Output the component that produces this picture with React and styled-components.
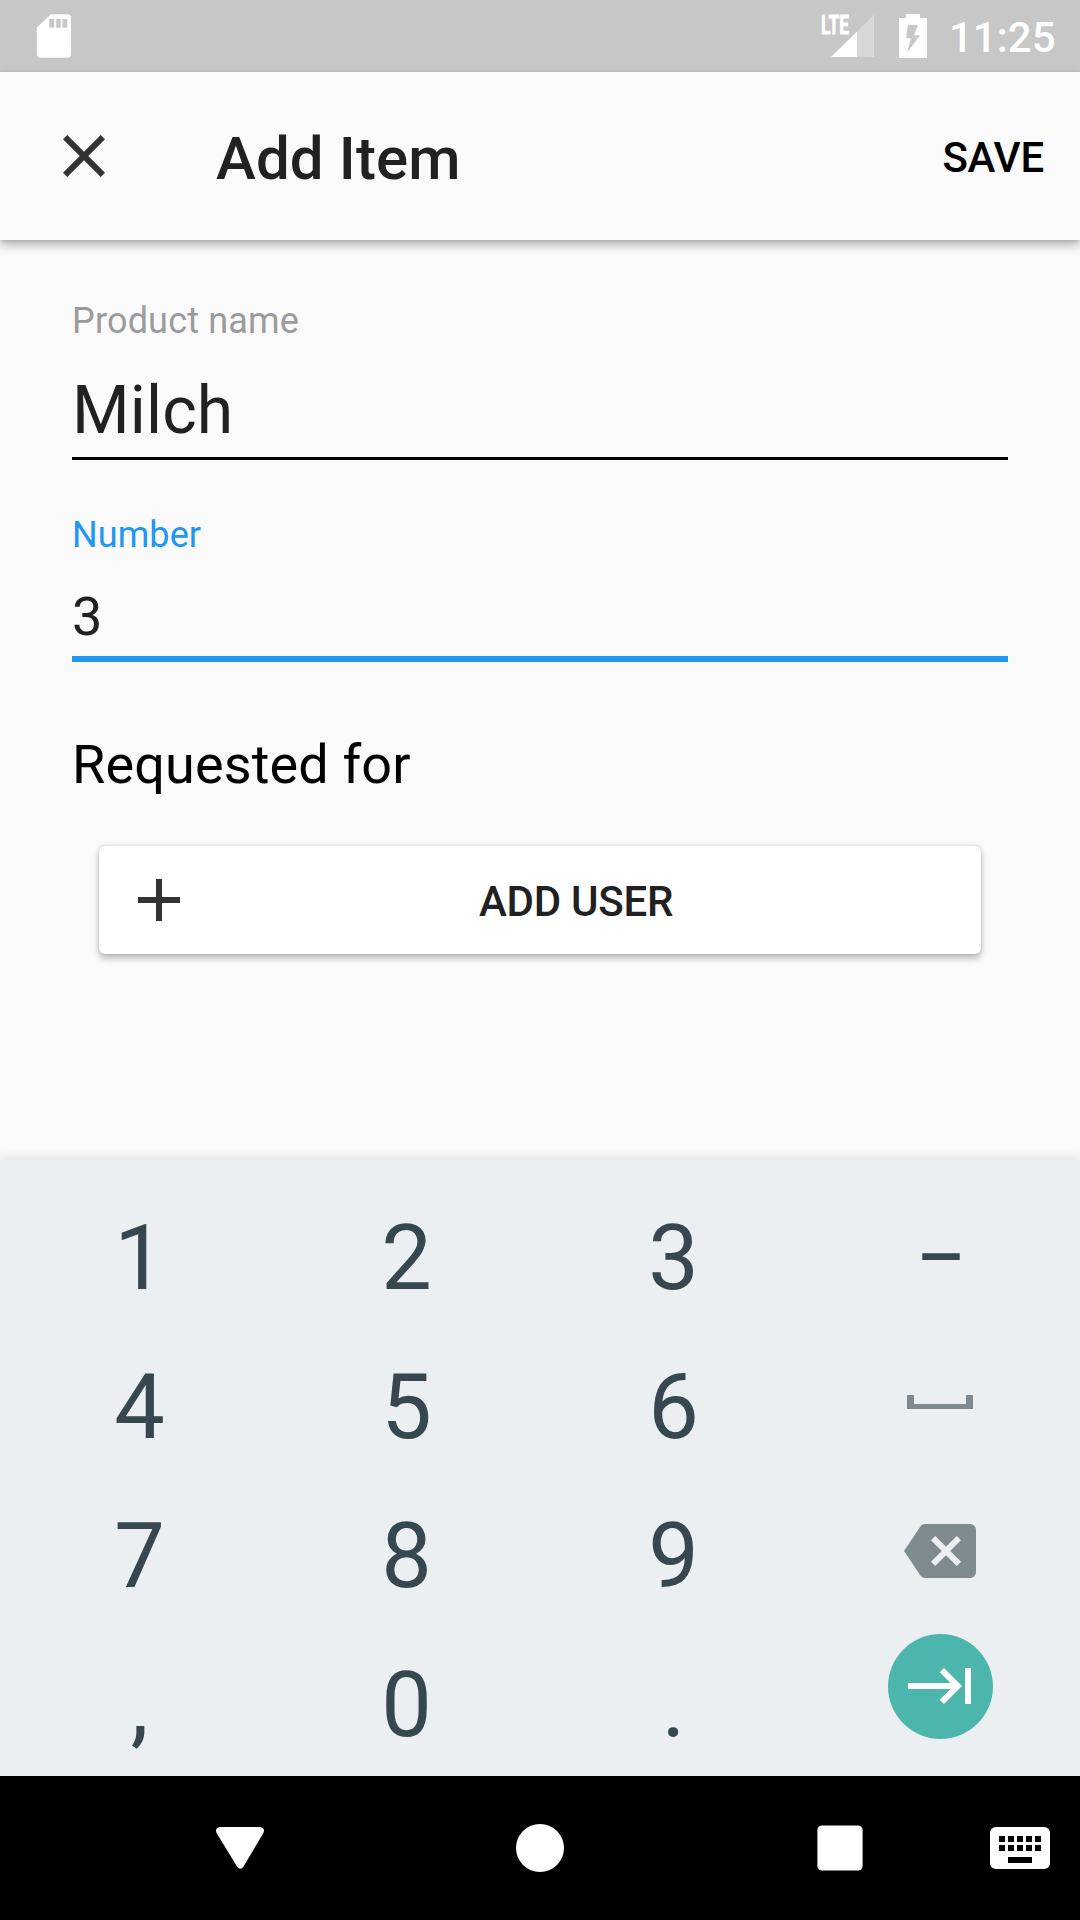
import React from 'react';
import styled, { createGlobalStyle } from 'styled-components';

const GlobalStyle = createGlobalStyle`
  * { box-sizing: border-box; }
  body { margin: 0; background: #fafafa; }
  button, input { font: inherit; color: inherit; border: 0; background: none; padding: 0; margin: 0; outline: 0; }
  svg { display: block; flex: none; }
`;

const Screen = styled.div`
  width: 1080px;
  height: 1920px;
  display: flex;
  flex-direction: column;
  overflow: hidden;
  background: #fafafa;
  color: #212121;
  font-family: Roboto, 'Liberation Sans', sans-serif;
`;

const StatusBar = styled.header`
  height: 72px;
  flex: none;
  display: flex;
  align-items: center;
  justify-content: space-between;
  padding: 0 25px 0 36px;
  background: #c7c7c7;
  color: #fff;
`;

const StatusGroup = styled.div`
  display: flex;
  align-items: center;
`;

const BatteryIcon = styled.svg`
  margin-left: 25px;
`;

const SignalIcon = styled.svg`
  overflow: visible;
`;

const Clock = styled.time`
  width: 106px;
  margin-left: 22px;
  padding-top: 3px;
  text-align: right;
  white-space: nowrap;
  font-size: 42px;
  font-weight: 500;
  line-height: 50px;
`;

const Toolbar = styled.div`
  height: 168px;
  flex: none;
  display: flex;
  align-items: center;
  padding: 0 36px 0 48px;
  background: #fafafa;
  box-shadow: 0 6px 9px rgba(0, 0, 0, 0.24), 0 1px 4px rgba(0, 0, 0, 0.16);
`;

const IconButton = styled.button`
  width: 72px;
  height: 72px;
  color: #333;
`;

const Title = styled.h1`
  flex: 1;
  margin: 0 0 0 96px;
  padding-top: 5px;
  font-size: 60px;
  font-weight: 500;
  line-height: 70px;
  letter-spacing: 0.12px;
`;

const SaveButton = styled.button`
  padding-top: 3px;
  color: #000;
  font-size: 42px;
  font-weight: 500;
  line-height: 50px;
  letter-spacing: -0.2px;
`;

const Form = styled.main`
  flex: 1;
  display: flex;
  flex-direction: column;
  padding: 60px 72px 0;
`;

const Field = styled.label`
  display: flex;
  flex-direction: column;
  margin-bottom: ${(p) => p.$after}px;
`;

const Label = styled.span`
  margin-bottom: 29px;
  color: ${(p) => (p.$active ? '#2196f3' : '#9b9b9b')};
  font-size: 36px;
  line-height: 42px;
  letter-spacing: ${(p) => (p.$active ? 0.08 : 0.18)}px;
`;

const Input = styled.input`
  width: 100%;
  height: ${(p) => p.$height}px;
  padding-bottom: 8px;
  border-bottom: ${(p) => (p.$active ? '6px solid #2196f3' : '3px solid #000')};
  font-size: ${(p) => p.$size}px;
  letter-spacing: 0.15px;
`;

const SectionTitle = styled.h2`
  margin: 0 0 49px;
  color: #000;
  font-size: 54px;
  font-weight: 400;
  line-height: 64px;
  letter-spacing: 0.14px;
`;

const AddUserButton = styled.button`
  height: 108px;
  margin: 0 27px;
  padding: 0 24px;
  display: flex;
  align-items: center;
  border-radius: 6px;
  background: #fff;
  box-shadow: 0 5px 6px rgba(0, 0, 0, 0.22), 0 0 4px rgba(0, 0, 0, 0.16);
`;

const ButtonText = styled.span`
  flex: 1;
  padding-top: 3px;
  text-align: center;
  font-size: 42px;
  font-weight: 500;
  line-height: 50px;
  letter-spacing: -0.25px;
`;

const Keyboard = styled.section`
  height: 616px;
  flex: none;
  padding: 10px 6px;
  display: grid;
  grid-template-columns: repeat(4, 267px);
  grid-auto-rows: 149px;
  background: #ebeff2;
  box-shadow: 0 0 10px 2px rgba(0, 0, 0, 0.11);
`;

const Key = styled.button`
  padding-top: 28px;
  display: flex;
  align-items: center;
  justify-content: center;
  color: #37474f;
  font-size: 90px;
  line-height: 121px;
`;

const Dash = styled.span`
  padding-left: 2px;
  transform: scaleX(0.85);
`;

const KeyIcon = styled.span`
  display: flex;
  margin-bottom: 11px;
  padding-right: 1px;
  color: #808b91;
`;

const NextCircle = styled.span`
  width: 105px;
  height: 105px;
  margin: 0 1px 39px 0;
  padding-left: 2px;
  display: flex;
  align-items: center;
  justify-content: center;
  border-radius: 50%;
  background: #4db6ac;
  color: #fff;
`;

const NavBar = styled.nav`
  height: 144px;
  flex: none;
  padding: 0 30px 0 90px;
  display: grid;
  grid-template-columns: repeat(3, 300px) 60px;
  align-items: center;
  justify-items: center;
  background: #000;
  color: #fff;
`;

const SdCard = () => (
  <svg width="36" height="44" viewBox="0 0 36 44">
    <path
      fill="#fff"
      fillRule="evenodd"
      d="M15 .3H31a4 4 0 0 1 4 4V39.700a4 4 0 0 1-4 4H4.800a4 4 0 0 1-4-4V13.500ZM13.300 5v8.700h4.900V5ZM20.200 5v8.700h4.500V5ZM26.500 5v8.700h4.700V5Z"
    />
  </svg>
);

const Signal = () => (
  <SignalIcon width="54" height="44" viewBox="0 0 54 44" fill="#fff">
    <path fillOpacity=".3" d="M37 17.500 54 .500V43H37Z" />
    <path d="M11 43 37 17.500V43Z" />
    <text x="1" y="19.500" fontSize="26" fontWeight="700" textLength="28" lengthAdjust="spacingAndGlyphs" stroke="#fff" strokeWidth=".8">
      LTE
    </text>
  </SignalIcon>
);

const Battery = () => (
  <BatteryIcon width="28" height="44" viewBox="0 0 28 44">
    <path
      fill="#fff"
      fillRule="evenodd"
      d="M7 0H21V4H28V44H0V4H7ZM9 11 7 24.300H12L8 38.700 21 21.300H15L19 11Z"
    />
  </BatteryIcon>
);

const Material = ({ d, size = 72 }) => (
  <svg width={size} height={size} viewBox="0 0 24 24" fill="currentColor">
    <path d={d} />
  </svg>
);

const CLOSE = 'M19 6.410 17.590 5 12 10.590 6.410 5 5 6.410 10.590 12 5 17.590 6.410 19 12 13.410 17.590 19 19 17.590 13.410 12Z';
const PLUS = 'M19 13h-6v6h-2v-6H5v-2h6V5h2v6h6v2Z';
const BACKSPACE =
  'M22 3H7c-.690 0-1.230.350-1.590.880L0 12l5.410 8.110c.360.530.900.890 1.590.890h15c1.100 0 2-.900 2-2V5c0-1.100-.900-2-2-2zm-3 12.590L17.590 17 14 13.410 10.410 17 9 15.590 12.590 12 9 8.410 10.410 7 14 10.590 17.590 7 19 8.410 15.410 12 19 15.590z';
const TAB = 'M11.590 7.410 15.170 11H1v2h14.170l-3.590 3.590L13 18l6-6-6-6-1.410 1.410ZM20 6v12h2V6h-2Z';

const SpaceIcon = () => (
  <svg width="66" height="14" viewBox="0 0 66 14" fill="currentColor">
    <path d="M0 0H7V9H59V0H66V14H0Z" />
  </svg>
);

const KEYS = [
  '1', '2', '3', <Dash key="dash">–</Dash>,
  '4', '5', '6', <KeyIcon key="space"><SpaceIcon /></KeyIcon>,
  '7', '8', '9', <KeyIcon key="back"><Material d={BACKSPACE} /></KeyIcon>,
  ',', '0', '.', <NextCircle key="next"><Material d={TAB} /></NextCircle>,
];

export default function App() {
  return (
    <>
      <GlobalStyle />
      <Screen>
        <StatusBar>
          <SdCard />
          <StatusGroup>
            <Signal />
            <Battery />
            <Clock>11:25</Clock>
          </StatusGroup>
        </StatusBar>

        <Toolbar>
          <IconButton aria-label="Close"><Material d={CLOSE} /></IconButton>
          <Title>Add Item</Title>
          <SaveButton>SAVE</SaveButton>
        </Toolbar>

        <Form>
          <Field $after={54}>
            <Label>Product name</Label>
            <Input $size={66} $height={89} defaultValue="Milch" />
          </Field>
          <Field $after={71}>
            <Label $active>Number</Label>
            <Input $size={54} $height={77} $active defaultValue="3" />
          </Field>
          <SectionTitle>Requested for</SectionTitle>
          <AddUserButton>
            <IconButton as="span"><Material d={PLUS} /></IconButton>
            <ButtonText>ADD USER</ButtonText>
          </AddUserButton>
        </Form>

        <Keyboard>
          {KEYS.map((k, i) => <Key key={i}>{k}</Key>)}
        </Keyboard>

        <NavBar>
          <svg width="48" height="42" viewBox="0 0 48 42" fill="currentColor">
            <path d="M3.500 0H44.500Q49.500 1 47.300 6.200L27.500 39.500Q24.500 44 21 39.500L.7 6.200Q-1.500 1 3.500 0Z" />
          </svg>
          <svg width="48" height="48" viewBox="0 0 48 48" fill="currentColor">
            <circle cx="24" cy="24" r="24" />
          </svg>
          <svg width="46" height="46" viewBox="0 0 46 46" fill="currentColor">
            <rect x=".4" y=".4" width="45.200" height="45.200" rx="4.500" />
          </svg>
          <svg width="60" height="42" viewBox="0 0 60 42">
            <rect width="60" height="42" rx="6" fill="#fff" />
            <path d="M9 9h6v6H9ZM18 9h6v6h-6ZM27 9h6v6h-6ZM36 9h6v6h-6ZM45 9h6v6h-6ZM9 18h6v6H9ZM18 18h6v6h-6ZM27 18h6v6h-6ZM36 18h6v6h-6ZM45 18h6v6h-6ZM18 30h24v6H18Z" />
          </svg>
        </NavBar>
      </Screen>
    </>
  );
}
